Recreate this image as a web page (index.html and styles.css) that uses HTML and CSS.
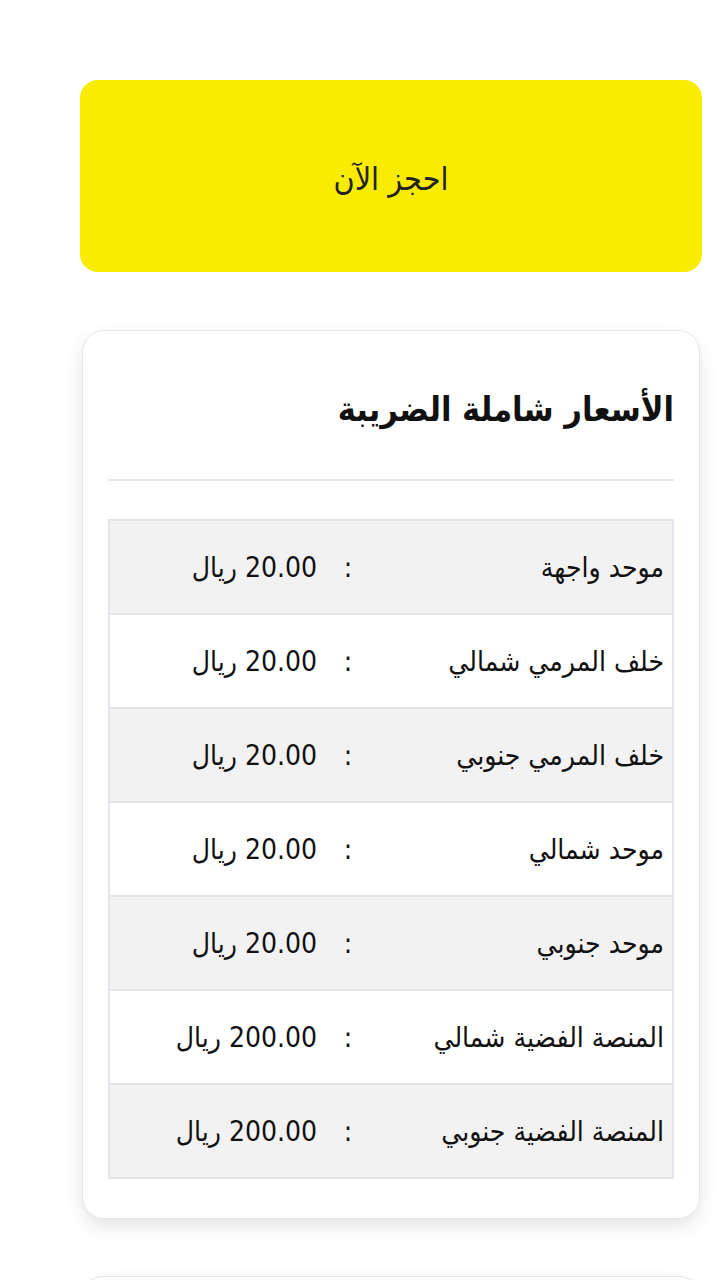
FILE: index.html
```html
<!DOCTYPE html>
<html lang="ar" dir="rtl">
<head>
<meta charset="utf-8">
<link rel="stylesheet" href="styles.css">
</head>
<body>
<main class="page">
  <a class="book-btn">احجز الآن</a>

  <section class="card">
    <h2 class="card-title">الأسعار شاملة الضريبة</h2>
    <hr class="divider">
    <table class="prices">
      <colgroup><col class="c-label"><col class="c-sep"><col class="c-price"></colgroup>
      <tbody>
        <tr><td class="lbl">موحد واجهة</td><td class="sep">:</td><td class="price">20.00 ريال</td></tr>
        <tr><td class="lbl">خلف المرمي شمالي</td><td class="sep">:</td><td class="price">20.00 ريال</td></tr>
        <tr><td class="lbl">خلف المرمي جنوبي</td><td class="sep">:</td><td class="price">20.00 ريال</td></tr>
        <tr><td class="lbl">موحد شمالي</td><td class="sep">:</td><td class="price">20.00 ريال</td></tr>
        <tr><td class="lbl">موحد جنوبي</td><td class="sep">:</td><td class="price">20.00 ريال</td></tr>
        <tr><td class="lbl">المنصة الفضية شمالي</td><td class="sep">:</td><td class="price">200.00 ريال</td></tr>
        <tr><td class="lbl">المنصة الفضية جنوبي</td><td class="sep">:</td><td class="price">200.00 ريال</td></tr>
      </tbody>
    </table>
  </section>

  <section class="card card-next"></section>
</main>
</body>
</html>
```

FILE: styles.css
```css
html, body {
  margin: 0;
  padding: 0;
  background: #ffffff;
  height: 1280px;
  overflow: hidden;
}

body {
  font-family: "DejaVu Sans Condensed", "DejaVu Sans", sans-serif;
  font-stretch: condensed;
  color: #1a1a1a;
}

.page {
  padding: 80px 18px 0 80px;
  display: flex;
  flex-direction: column;
}

.book-btn {
  display: flex;
  align-items: center;
  justify-content: center;
  height: 192px;
  box-sizing: border-box;
  padding-top: 6px;
  background: #f9ec00;
  border-radius: 18px;
  font-size: 32px;
  color: #222222;
  text-decoration: none;
}

.card {
  margin: 58px 2px 0 2px;
  background: #ffffff;
  border: 1px solid #e6e6e6;
  border-radius: 22px;
  box-shadow: 0 8px 18px rgba(0, 0, 0, 0.10);
  padding: 0 25px 39px 25px;
}

.card-title {
  margin: 0;
  padding-top: 52px;
  height: 104px;
  box-sizing: border-box;
  font-size: 34px;
  font-weight: 700;
  line-height: 52px;
  color: #111111;
  text-align: right;
}

.divider {
  margin: 44px 0 38px 0;
  border: 0;
  border-top: 2px solid #e8e8e8;
  height: 0;
}

.prices {
  width: 100%;
  border-collapse: collapse;
  border: 2px solid #e2e5ea;
}

.c-label { width: 310px; }
.c-sep { width: 30px; }

.prices tr {
  height: 94px;
}

.prices tr:nth-child(odd) {
  background: #f2f2f2;
}

.prices td {
  border-top: 2px solid #e2e5ea;
  border-bottom: 2px solid #e2e5ea;
  font-size: 28px;
  color: #111111;
  vertical-align: middle;
  padding: 0;
}

.lbl {
  text-align: right;
  padding-right: 8px !important;
}

.sep {
  text-align: center;
}

.price {
  text-align: right;
  padding-right: 16px !important;
}

.card-next {
  margin-top: 57px;
  height: 40px;
  padding: 0;
}
```
